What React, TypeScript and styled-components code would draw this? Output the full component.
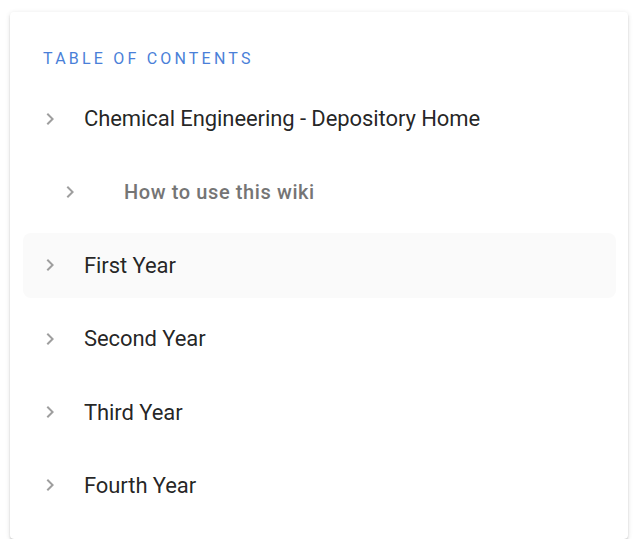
import React from "react";
import styled, { createGlobalStyle } from "styled-components";

const Global = createGlobalStyle`
  html, body { margin: 0; padding: 0; background: #ffffff; }
  body { font-family: Roboto, "Noto Sans", Arial, sans-serif; }
`;

const Page = styled.div`
  padding: 12px 8px 0 10px;
`;

const Card = styled.nav`
  box-sizing: border-box;
  width: 618px;
  height: 527px;
  background: #ffffff;
  border-radius: 4px;
  box-shadow: 0 3px 1px -2px rgba(0, 0, 0, 0.2), 0 2px 2px 0 rgba(0, 0, 0, 0.14),
    0 1px 5px 0 rgba(0, 0, 0, 0.12);
  padding: 37px 12px 0 13px;
  display: flex;
  flex-direction: column;
`;

const Title = styled.h2`
  margin: 0 0 17px 20px;
  font-family: Roboto, sans-serif;
  font-size: 16px;
  line-height: 20px;
  font-weight: 400;
  letter-spacing: 3.2px;
  text-transform: uppercase;
  color: #4a7fd8;
`;

const List = styled.ul`
  list-style: none;
  margin: 0;
  padding: 0;
  display: flex;
  flex-direction: column;
  gap: 8.4px;
`;

const Row = styled.li<{ $level: number; $active?: boolean }>`
  height: 65px;
  display: flex;
  align-items: center;
  padding-left: ${(p) => 15 + p.$level * 20}px;
  border-radius: 8px;
  background: ${(p) => (p.$active ? "#fafafa" : "transparent")};
  cursor: pointer;
`;

const Chevron = styled.svg`
  width: 24px;
  height: 24px;
  flex: none;
  fill: #9e9e9e;
`;

const Label = styled.span<{ $level: number }>`
  margin-left: ${(p) => 22 + p.$level * 20}px;
  font-family: Roboto, sans-serif;
  font-size: ${(p) => (p.$level ? 20 : 22)}px;
  font-weight: ${(p) => (p.$level ? 500 : 400)};
  color: ${(p) => (p.$level ? "#757575" : "rgba(0,0,0,0.87)")};
  letter-spacing: ${(p) => (p.$level ? "0.6px" : "-0.08px")};
  white-space: nowrap;
`;

const items = [
  { label: "Chemical Engineering - Depository Home", level: 0 },
  { label: "How to use this wiki", level: 1 },
  { label: "First Year", level: 0, active: true },
  { label: "Second Year", level: 0 },
  { label: "Third Year", level: 0 },
  { label: "Fourth Year", level: 0 },
];

export default function App() {
  return (
    <Page>
      <Global />
      <Card>
        <Title>Table of Contents</Title>
        <List>
          {items.map((it) => (
            <Row key={it.label} $level={it.level} $active={it.active}>
              <Chevron viewBox="0 0 24 24" aria-hidden="true">
                <path d="M10 6L8.59 7.41 13.17 12l-4.58 4.59L10 18l6-6z" />
              </Chevron>
              <Label $level={it.level}>{it.label}</Label>
            </Row>
          ))}
        </List>
      </Card>
    </Page>
  );
}
